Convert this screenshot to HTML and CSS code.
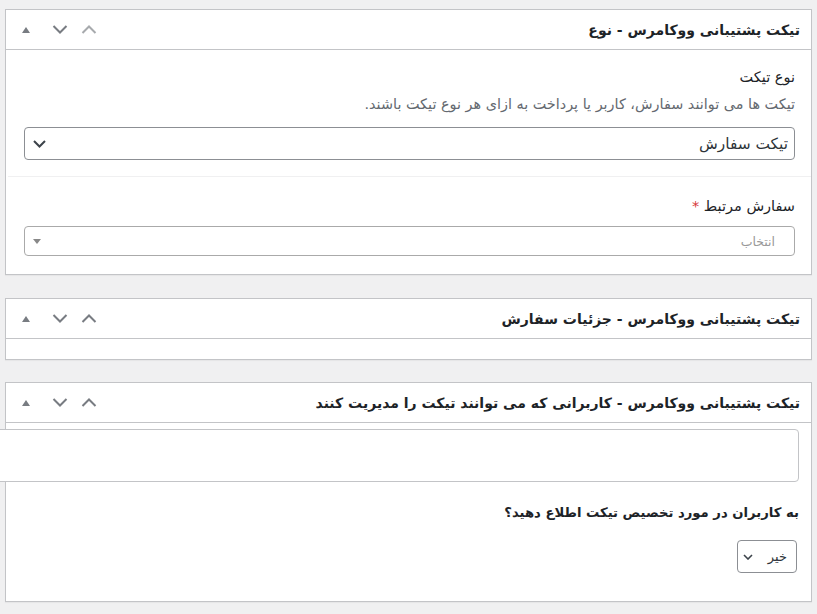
FILE: index.html
```html
<!DOCTYPE html>
<html lang="fa" dir="rtl">
<head>
<meta charset="utf-8">
<title>تیکت پشتیبانی</title>
<link rel="stylesheet" href="styles.css">
</head>
<body>
<div class="page">

  <div class="postbox">
    <div class="postbox-header">
      <h2 class="hndle">تیکت پشتیبانی ووکامرس - نوع</h2>
      <div class="handle-actions">
        <span class="hbtn hbtn-up disabled"><svg width="16" height="9" viewBox="0 0 16 9"><path d="M1.5 8 L8 1.5 L14.5 8" fill="none" stroke="currentColor" stroke-width="2"/></svg></span>
        <span class="hbtn hbtn-down"><svg width="16" height="9" viewBox="0 0 16 9"><path d="M1.5 1 L8 7.5 L14.5 1" fill="none" stroke="currentColor" stroke-width="2"/></svg></span>
        <span class="hbtn hbtn-toggle"><svg width="8" height="6" viewBox="0 0 8 6"><path d="M0 6 L4 0 L8 6 Z" fill="currentColor"/></svg></span>
      </div>
    </div>
    <div class="inside">
      <div class="field field-first">
        <div class="label">نوع تیکت</div>
        <div class="desc">تیکت ها می توانند سفارش، کاربر یا پرداخت به ازای هر نوع تیکت باشند.</div>
        <div class="select">
          <span>تیکت سفارش</span>
          <svg width="13" height="8" viewBox="0 0 13 8"><path d="M1 1 L6.5 6.5 L12 1" fill="none" stroke="currentColor" stroke-width="2"/></svg>
        </div>
      </div>
      <div class="field field-second">
        <div class="label">سفارش مرتبط <span class="req">*</span></div>
        <div class="select2">
          <span>انتخاب</span>
          <svg width="8" height="5" viewBox="0 0 8 5"><path d="M0 0 L8 0 L4 5 Z" fill="currentColor"/></svg>
        </div>
      </div>
    </div>
  </div>

  <div class="postbox">
    <div class="postbox-header">
      <h2 class="hndle">تیکت پشتیبانی ووکامرس - جزئیات سفارش</h2>
      <div class="handle-actions">
        <span class="hbtn hbtn-up"><svg width="16" height="9" viewBox="0 0 16 9"><path d="M1.5 8 L8 1.5 L14.5 8" fill="none" stroke="currentColor" stroke-width="2"/></svg></span>
        <span class="hbtn hbtn-down"><svg width="16" height="9" viewBox="0 0 16 9"><path d="M1.5 1 L8 7.5 L14.5 1" fill="none" stroke="currentColor" stroke-width="2"/></svg></span>
        <span class="hbtn hbtn-toggle"><svg width="8" height="6" viewBox="0 0 8 6"><path d="M0 6 L4 0 L8 6 Z" fill="currentColor"/></svg></span>
      </div>
    </div>
    <div class="inside inside-empty"></div>
  </div>

  <div class="postbox">
    <div class="postbox-header">
      <h2 class="hndle">تیکت پشتیبانی ووکامرس - کاربرانی که می توانند تیکت را مدیریت کنند</h2>
      <div class="handle-actions">
        <span class="hbtn hbtn-up"><svg width="16" height="9" viewBox="0 0 16 9"><path d="M1.5 8 L8 1.5 L14.5 8" fill="none" stroke="currentColor" stroke-width="2"/></svg></span>
        <span class="hbtn hbtn-down"><svg width="16" height="9" viewBox="0 0 16 9"><path d="M1.5 1 L8 7.5 L14.5 1" fill="none" stroke="currentColor" stroke-width="2"/></svg></span>
        <span class="hbtn hbtn-toggle"><svg width="8" height="6" viewBox="0 0 8 6"><path d="M0 6 L4 0 L8 6 Z" fill="currentColor"/></svg></span>
      </div>
    </div>
    <div class="inside inside-users">
      <div class="users-input"></div>
      <div class="strong-label">به کاربران در مورد تخصیص تیکت اطلاع دهید؟</div>
      <div class="small-select">
        <span>خیر</span>
        <svg width="10" height="6" viewBox="0 0 10 6"><path d="M1 1 L5 5 L9 1" fill="none" stroke="currentColor" stroke-width="1.6"/></svg>
      </div>
    </div>
  </div>

</div>
</body>
</html>
```
FILE: styles.css
```css
html, body {
  margin: 0;
  padding: 0;
}
body {
  background: #f0f0f1;
  font-family: "DejaVu Sans", sans-serif;
  color: #3c434a;
  direction: rtl;
  overflow: hidden;
  height: 614px;
}
.page {
  padding: 9px 5px 0 5px;
}
.postbox {
  background: #fff;
  border: 1px solid #c3c4c7;
  margin-bottom: 22px;
  box-shadow: 0 1px 1px rgba(0, 0, 0, 0.04);
}
.postbox:first-child {
  margin-bottom: 23px;
}
.postbox-header {
  display: flex;
  align-items: center;
  justify-content: space-between;
  height: 39px;
  border-bottom: 1px solid #c3c4c7;
}
.hndle {
  margin: 0;
  padding: 0 11px 0 0;
  font-size: 14px;
  font-weight: 700;
  line-height: 20px;
  color: #1d2327;
  white-space: nowrap;
}
.handle-actions {
  display: flex;
  align-items: center;
  height: 100%;
}
.hbtn {
  display: flex;
  align-items: center;
  justify-content: center;
  height: 100%;
  color: #787c82;
}
.hbtn-up { width: 31px; }
.hbtn-down { width: 27px; }
.hbtn-toggle { width: 40px; }
.hbtn.disabled { color: #a7aaad; }

.field {
  padding-right: 16px;
  padding-left: 18px;
}
.field-first {
  padding-top: 17px;
  padding-bottom: 16px;
  border-bottom: 1px solid #f0f0f1;
  margin: 0 0 0 2px;
  padding-left: 16px;
}
.field-second {
  padding-top: 19px;
  padding-bottom: 18px;
}
.label {
  font-size: 14.5px;
  line-height: 20px;
  color: #1d2327;
}
.req {
  color: #d63638;
}
.desc {
  margin-top: 7px;
  font-size: 14.4px;
  line-height: 20px;
  color: #646970;
  white-space: nowrap;
}
.select {
  margin-top: 13px;
  height: 33px;
  box-sizing: border-box;
  border: 1px solid #8c8f94;
  border-radius: 4px;
  display: flex;
  align-items: center;
  justify-content: space-between;
  padding: 0 6px 0 8px;
  font-size: 15.4px;
  color: #2c3338;
}
.select svg { color: #3c434a; }
.select2 {
  margin-top: 10px;
  height: 30px;
  box-sizing: border-box;
  border: 1px solid #aaa;
  border-radius: 4px;
  display: flex;
  align-items: center;
  justify-content: space-between;
  padding: 0 19px 0 8px;
  font-size: 12.5px;
  color: #999;
}
.select2 svg { color: #888; }

.inside-empty {
  height: 20px;
}
.inside-users {
  padding: 6px 12px 28px 0;
}
.users-input {
  height: 53px;
  box-sizing: border-box;
  border: 1px solid #c3c4c7;
  border-radius: 4px;
  background: #fff;
  margin-left: -30px;
  position: relative;
}
.strong-label {
  margin-top: 21px;
  font-size: 13.2px;
  font-weight: 700;
  line-height: 20px;
  color: #1d2327;
}
.small-select {
  margin-top: 17px;
  margin-right: 2px;
  width: 60px;
  height: 33px;
  box-sizing: border-box;
  border: 1px solid #8c8f94;
  border-radius: 4px;
  display: flex;
  align-items: center;
  justify-content: space-between;
  padding: 0 9px 0 5px;
  font-size: 13px;
  color: #2c3338;
}
.small-select svg { color: #3c434a; }
```
